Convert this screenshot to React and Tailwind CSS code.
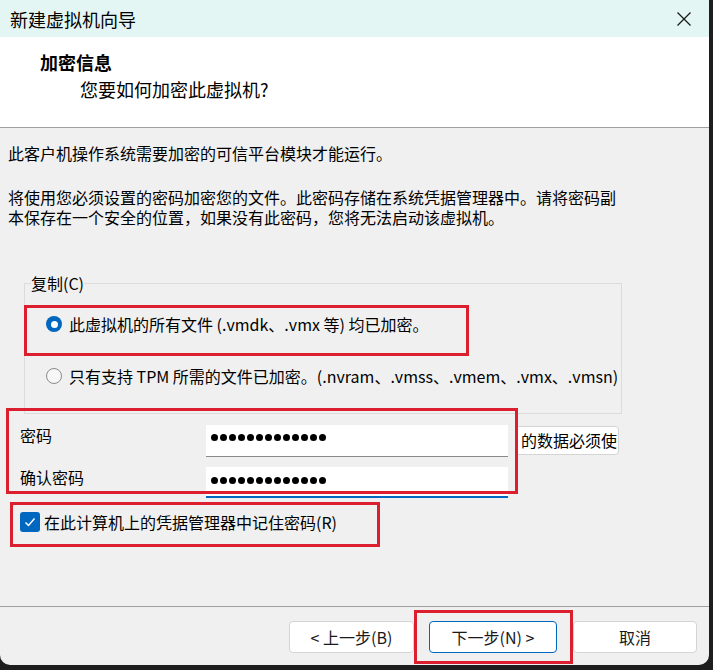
import { useState } from 'react';

const RedBox = ({ className }) => (
  <div className={`pointer-events-none absolute border-[3px] border-[#dc1f2e] ${className}`} />
);

const Dots = ({ count = 13 }) => (
  <div className="flex gap-[2px]">
    {Array.from({ length: count }).map((_, i) => (
      <span key={i} className="block h-[7px] w-[7px] rounded-full bg-black" />
    ))}
  </div>
);

const Radio = ({ checked, label, onClick }) => (
  <button type="button" onClick={onClick} className="flex h-[20px] items-center gap-[7px] text-left">
    {checked ? (
      <span className="flex h-[16px] w-[16px] items-center justify-center rounded-full bg-[#0067c0]">
        <span className="block h-[7px] w-[7px] rounded-full bg-white" />
      </span>
    ) : (
      <span className="block h-[16px] w-[16px] rounded-full border border-[#8a8a8a] bg-[#f7f7f7]" />
    )}
    <span className="whitespace-nowrap text-[16px] leading-[20px]">{label}</span>
  </button>
);

const WizardButton = ({ children, primary, className = '' }) => (
  <button
    type="button"
    className={`h-[32px] rounded-[4px] border bg-white text-[16px] leading-[20px] text-[#1a1a1a] ${
      primary ? 'border-[#0067c0]' : 'border-[#d4d4d4]'
    } ${className}`}
  >
    {children}
  </button>
);

export default function App() {
  const [scope, setScope] = useState('all');
  const [remember, setRemember] = useState(true);

  return (
    <div className="relative h-[670px] w-[713px] overflow-hidden bg-[#1e1e1e] font-['Noto_Sans_CJK_SC','Noto_Sans',sans-serif] text-black">
      <div className="flex h-[665px] w-[709px] flex-col overflow-hidden rounded-b-[10px] bg-[#f0f0f0]">
        {/* title bar */}
        <div className="flex h-[37px] shrink-0 items-center justify-between bg-[#e4f6f4] pl-[10px] pr-[17px]">
          <span className="text-[18px] leading-[24px]">新建虚拟机向导</span>
          <svg width="16" height="16" viewBox="0 0 16 16" fill="none" stroke="#1a1a1a" strokeWidth="1.3">
            <path d="M1.5 1.5 L14.5 14.5 M14.5 1.5 L1.5 14.5" />
          </svg>
        </div>

        {/* header */}
        <div className="h-[91px] shrink-0 border-b border-[#a0a0a0] bg-white pt-[13px]">
          <div className="pl-[40px] text-[18px] font-bold leading-[24px]">加密信息</div>
          <div className="mt-[3px] pl-[80px] text-[18px] leading-[24px]">您要如何加密此虚拟机?</div>
        </div>

        {/* body */}
        <div className="flex-1 px-[8px] pt-[15px]">
          <p className="text-[16px] leading-[20px]">此客户机操作系统需要加密的可信平台模块才能运行。</p>
          <p className="mt-[24px] w-[610px] text-[16px] leading-[20px]">
            将使用您必须设置的密码加密您的文件。此密码存储在系统凭据管理器中。请将密码副本保存在一个安全的位置，如果没有此密码，您将无法启动该虚拟机。
          </p>

          <fieldset className="ml-[16px] mt-[46px] h-[141px] w-[598px] border border-[#dcdcdc] pl-[6px]">
            <legend className="text-[16px] leading-[20px]">复制(C)</legend>
            <div className="ml-[15px] mt-[21px]">
              <Radio checked={scope === 'all'} onClick={() => setScope('all')} label="此虚拟机的所有文件 (.vmdk、.vmx 等) 均已加密。" />
            </div>
            <div className="ml-[15px] mt-[32px]">
              <Radio
                checked={scope === 'tpm'}
                onClick={() => setScope('tpm')}
                label="只有支持 TPM 所需的文件已加密。(.nvram、.vmss、.vmem、.vmx、.vmsn)"
              />
            </div>
          </fieldset>

          {/* password */}
          <div className="mt-[11px] flex items-start pl-[12px]">
            <span className="w-[186px] pt-[0px] text-[16px] leading-[20px]">密码</span>
            <div className="flex h-[32px] w-[302px] items-center border-b border-[#8a8a8a] bg-white pb-[6px] pl-[5px]">
              <Dots />
            </div>
            <div className="ml-[7px] mt-[1px] h-[29px] w-[104px] overflow-hidden whitespace-nowrap rounded-[4px] border border-[#d4d4d4] bg-white pl-[5px] text-[16px] leading-[27px]">
              的数据必须使
            </div>
          </div>
          <div className="mt-[10px] flex items-start pl-[12px]">
            <span className="w-[186px] text-[16px] leading-[20px]">确认密码</span>
            <div className="flex h-[31px] w-[302px] items-center border-b-2 border-[#0067c0] bg-white pb-[2px] pl-[5px]">
              <Dots />
            </div>
          </div>

          {/* remember */}
          <button
            type="button"
            onClick={() => setRemember(!remember)}
            className="ml-[12px] mt-[14px] flex h-[20px] items-center gap-[4px]"
          >
            {remember ? (
              <span className="flex h-[20px] w-[20px] items-center justify-center rounded-[3px] bg-[#0067c0]">
                <svg width="14" height="14" viewBox="0 0 14 14" fill="none" stroke="white" strokeWidth="1.5">
                  <path d="M2.5 7.5 L5.5 10.5 L11.5 3.5" />
                </svg>
              </span>
            ) : (
              <span className="block h-[20px] w-[20px] rounded-[3px] border border-[#8a8a8a] bg-white" />
            )}
            <span className="whitespace-nowrap text-[16px] leading-[20px]">在此计算机上的凭据管理器中记住密码(R)</span>
          </button>
        </div>

        {/* footer */}
        <div className="flex h-[59px] shrink-0 items-start justify-end border-t border-[#a0a0a0] pr-[12px] pt-[14px]">
          <WizardButton className="w-[125px]">&lt; 上一步(B)</WizardButton>
          <WizardButton primary className="ml-[15px] w-[128px]">
            下一步(N) &gt;
          </WizardButton>
          <WizardButton className="ml-[16px] w-[124px]">取消</WizardButton>
        </div>
      </div>

      <RedBox className="left-[24px] top-[305px] h-[51px] w-[445px]" />
      <RedBox className="left-[6px] top-[408px] h-[86px] w-[512px]" />
      <RedBox className="left-[10px] top-[502px] h-[45px] w-[370px]" />
      <RedBox className="left-[414px] top-[610px] h-[54px] w-[159px]" />
    </div>
  );
}
